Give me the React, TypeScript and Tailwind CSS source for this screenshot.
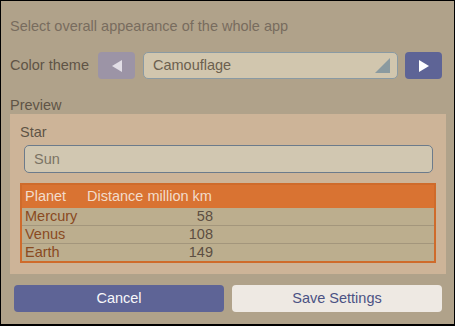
const planets = [
  { name: "Mercury", distance: 58 },
  { name: "Venus", distance: 108 },
  { name: "Earth", distance: 149 },
];

export default function App() {
  return (
    <div className="w-[455px] h-[326px] border border-b-2 border-black bg-[#b0a28a] font-['Liberation_Sans',Arial,sans-serif] text-[14.5px] leading-[17px] text-[#5f5446] overflow-hidden">
      <div className="pl-[9px] pt-[17px] text-[#786c5e]">Select overall appearance of the whole app</div>

      {/* Theme picker */}
      <div className="mt-[17px] pl-[9px] flex items-center h-[27px]">
        <span className="w-[88px] shrink-0">Color theme</span>
        <button className="w-[37px] h-[27px] rounded-[4px] bg-[#9c94a6] flex items-center justify-center">
          <svg width="10" height="12" viewBox="0 0 10 12">
            <polygon points="10,0 10,12 0,6" fill="#e2dee6" />
          </svg>
        </button>
        <div className="ml-[8px] relative w-[255px] h-[27px] rounded-[5px] border border-[#8a9aa3] bg-[#d1c6ae] pl-[9px] flex items-center text-[#6c604e]">
          Camouflage
          <svg className="absolute right-[7px] top-[5px]" width="15" height="16" viewBox="0 0 15 16">
            <polygon points="15,0 15,15 0,15" fill="#8a9aa0" />
          </svg>
        </div>
        <button className="ml-[7px] w-[37px] h-[27px] rounded-[4px] bg-[#5e6496] flex items-center justify-center">
          <svg width="10" height="12" viewBox="0 0 10 12">
            <polygon points="0,0 0,12 10,6" fill="#ffffff" />
          </svg>
        </button>
      </div>

      <div className="mt-[18px] pl-[9px]">Preview</div>

      {/* Preview panel */}
      <div className="ml-[9px] w-[436px] bg-[#cdb498] pt-[10px] pb-[11px] pl-[10px]">
        <div>Star</div>
        <div className="mt-[4px] ml-[4px] w-[409px] h-[28px] rounded-[5px] border border-[#6c7b8b] bg-[#d1c7b1] pl-[9px] flex items-center text-[#7b7364]">
          Sun
        </div>

        <div className="mt-[10px] w-[416px] border-2 border-[#cf6b2b] bg-[#bcae8e]">
          <div className="h-[23px] bg-[#d97332] flex items-center text-[#f2dccb]">
            <span className="w-[62px] pl-[3px]">Planet</span>
            <span className="w-[132px] px-[3px]">Distance million km</span>
          </div>
          {planets.map((p, i) => (
            <div key={p.name} className={i > 0 ? "h-[18px] border-t border-[#a3967c] flex items-center" : "h-[17px] flex items-center"}>
              <span className="w-[62px] pl-[3px] text-[#8a4a1f]">{p.name}</span>
              <span className="w-[132px] px-[3px] text-right text-[#5c4e42]">{p.distance}</span>
            </div>
          ))}
        </div>
      </div>

      {/* Actions */}
      <div className="mt-[11px] pl-[13px] flex gap-[8px]">
        <button className="w-[210px] h-[27px] rounded-[4px] bg-[#5e6496] text-[#f7f7fa]">Cancel</button>
        <button className="w-[210px] h-[27px] rounded-[4px] bg-[#eee9e3] text-[#4b5283]">Save Settings</button>
      </div>
    </div>
  );
}
